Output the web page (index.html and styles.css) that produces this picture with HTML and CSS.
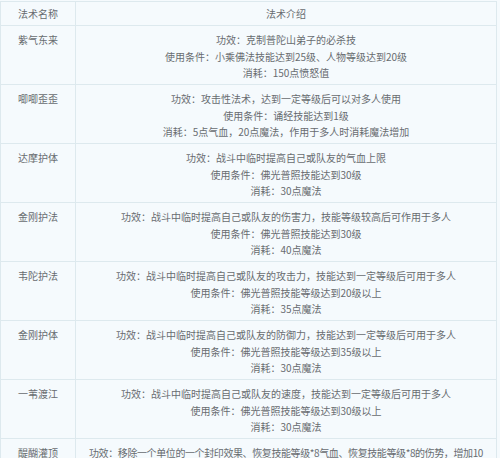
FILE: index.html
```html
<!DOCTYPE html>
<html lang="zh">
<head>
<meta charset="utf-8">
<title>法术介绍</title>
<link rel="stylesheet" href="styles.css">
</head>
<body>
<table class="skills">
  <thead>
    <tr>
      <th class="name">法术名称</th>
      <th class="desc">法术介绍</th>
    </tr>
  </thead>
  <tbody>
    <tr>
      <td class="name">紫气东来</td>
      <td class="desc"><div class="lines">
        <span>功效：克制普陀山弟子的必杀技</span>
        <span>使用条件：小乘佛法技能达到25级、人物等级达到20级</span>
        <span>消耗：150点愤怒值</span>
      </div></td>
    </tr>
    <tr>
      <td class="name">唧唧歪歪</td>
      <td class="desc"><div class="lines">
        <span>功效：攻击性法术，达到一定等级后可以对多人使用</span>
        <span>使用条件：诵经技能达到1级</span>
        <span>消耗：5点气血，20点魔法，作用于多人时消耗魔法增加</span>
      </div></td>
    </tr>
    <tr>
      <td class="name">达摩护体</td>
      <td class="desc"><div class="lines">
        <span>功效：战斗中临时提高自己或队友的气血上限</span>
        <span>使用条件：佛光普照技能达到30级</span>
        <span>消耗：30点魔法</span>
      </div></td>
    </tr>
    <tr>
      <td class="name">金刚护法</td>
      <td class="desc"><div class="lines">
        <span>功效：战斗中临时提高自己或队友的伤害力，技能等级较高后可作用于多人</span>
        <span>使用条件：佛光普照技能达到30级</span>
        <span>消耗：40点魔法</span>
      </div></td>
    </tr>
    <tr>
      <td class="name">韦陀护法</td>
      <td class="desc"><div class="lines">
        <span>功效：战斗中临时提高自己或队友的攻击力，技能达到一定等级后可用于多人</span>
        <span>使用条件：佛光普照技能等级达到20级以上</span>
        <span>消耗：35点魔法</span>
      </div></td>
    </tr>
    <tr>
      <td class="name">金刚护体</td>
      <td class="desc"><div class="lines">
        <span>功效：战斗中临时提高自己或队友的防御力，技能达到一定等级后可用于多人</span>
        <span>使用条件：佛光普照技能等级达到35级以上</span>
        <span>消耗：30点魔法</span>
      </div></td>
    </tr>
    <tr>
      <td class="name">一苇渡江</td>
      <td class="desc"><div class="lines">
        <span>功效：战斗中临时提高自己或队友的速度，技能达到一定等级后可用于多人</span>
        <span>使用条件：佛光普照技能等级达到30级以上</span>
        <span>消耗：30点魔法</span>
      </div></td>
    </tr>
    <tr>
      <td class="name">醍醐灌顶</td>
      <td class="desc"><div class="lines">
        <span class="tight">功效：移除一个单位的一个封印效果、恢复技能等级*8气血、恢复技能等级*8的伤势，增加10</span>
        <span>点愤怒</span>
        <span>消耗：80点魔法</span>
      </div></td>
    </tr>
  </tbody>
</table>
</body>
</html>
```
FILE: styles.css
```css
html, body {
  margin: 0;
  padding: 0;
  background: #f5fafd;
}

body {
  padding: 1px 0 0 0;
  font-family: "Noto Sans CJK SC", "Noto Sans", sans-serif;
  font-size: 10px;
  color: #686c70;
  overflow: hidden;
}

.skills {
  border-collapse: collapse;
  width: 497px;
  table-layout: fixed;
}

.skills th,
.skills td {
  border: 1px solid #dde9ee;
  line-height: 16.5px;
  vertical-align: top;
  font-weight: normal;
  text-align: center;
}

.skills th {
  padding: 3.5px 0 3px;
}

.skills td {
  padding: 6px 0 2.5px;
}

.skills .name {
  width: 74px;
}

.skills td.desc {
  padding-left: 10px;
  padding-right: 10px;
}

.skills th.desc {
  padding-left: 0;
  padding-right: 0;
}

.lines {
  display: flex;
  flex-direction: column;
  align-items: center;
}

.lines span {
  white-space: nowrap;
}

.lines .tight {
  letter-spacing: -0.4px;
}
```
